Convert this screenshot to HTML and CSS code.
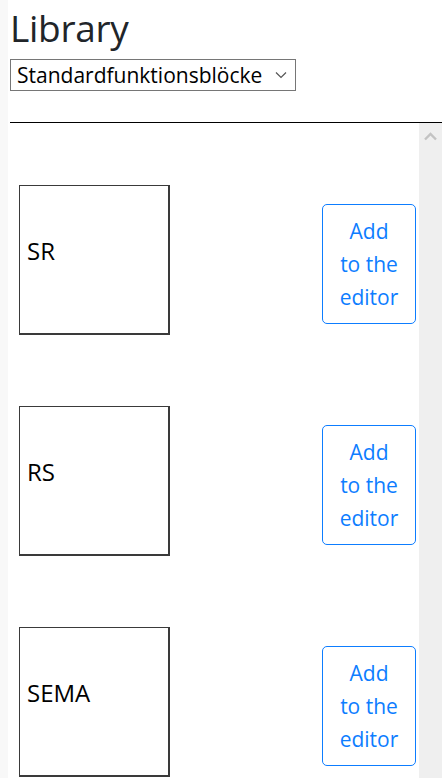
FILE: index.html
```html
<!DOCTYPE html>
<html lang="de">
<head>
<meta charset="utf-8">
<title>Library</title>
<link rel="stylesheet" href="styles.css">
</head>
<body>
<div class="page">
  <header class="head">
    <h1 class="title">Library</h1>
    <div class="select-wrap">
      <select class="select">
        <option>Standardfunktionsblöcke</option>
      </select>
      <svg class="chev" width="12" height="8" viewBox="0 0 12 8"><path d="M1 1.5 L6 6.5 L11 1.5" fill="none" stroke="#555" stroke-width="1.2"/></svg>
    </div>
    <hr class="rule">
  </header>
  <div class="pane">
    <div class="list">
      <div class="row">
        <div class="block"><span class="label">SR</span></div>
        <button class="add">Add<br>to the<br>editor</button>
      </div>
      <div class="row">
        <div class="block"><span class="label">RS</span></div>
        <button class="add">Add<br>to the<br>editor</button>
      </div>
      <div class="row">
        <div class="block"><span class="label">SEMA</span></div>
        <button class="add">Add<br>to the<br>editor</button>
      </div>
    </div>
    <div class="scrollbar">
      <svg class="up" width="13" height="9" viewBox="0 0 13 9"><path d="M1 7.5 L6.5 2 L12 7.5" fill="none" stroke="#c3c3c3" stroke-width="2.4"/></svg>
    </div>
  </div>
</div>
</body>
</html>
```
FILE: styles.css
```css
html, body {
  margin: 0;
  padding: 0;
  height: 100%;
  overflow: hidden;
}
body {
  font-family: "Open Sans", "Noto Sans", sans-serif;
  color: #212529;
  background: linear-gradient(to right, #f8f8f8 8px, #ffffff 8px);
}
.page {
  display: flex;
  flex-direction: column;
  height: 100%;
  padding-left: 10px;
  box-sizing: border-box;
}
.head {
  padding-top: 4px;
}
.title {
  margin: 0;
  font-weight: 400;
  font-size: 37px;
  line-height: 48px;
  letter-spacing: -0.3px;
}
.select-wrap {
  position: relative;
  width: 286px;
  margin-top: 7px;
}
.select {
  appearance: none;
  -webkit-appearance: none;
  width: 286px;
  height: 32px;
  border: 1px solid #767676;
  border-radius: 0;
  background: #fff;
  color: #000;
  font-family: "Open Sans", sans-serif;
  font-size: 21px;
  padding: 0 0 0 6px;
  letter-spacing: 0;
}
.chev {
  position: absolute;
  right: 9px;
  top: 12px;
}
.rule {
  margin: 31px 0 0;
  border: 0;
  border-top: 1px solid #000;
}
.pane {
  flex: 1;
  display: flex;
  min-height: 0;
}
.list {
  flex: 1;
  display: flex;
  flex-direction: column;
  gap: 71px;
  padding: 62px 3px 0 9px;
  overflow: hidden;
}
.row {
  display: flex;
  align-items: center;
  justify-content: space-between;
  flex-shrink: 0;
}
.block {
  width: 151px;
  height: 150px;
  box-sizing: border-box;
  border-style: solid;
  border-color: #3a3a3a;
  border-width: 1px 2px 2px 1px;
  display: flex;
  align-items: center;
  padding: 0 0 18px 7px;
  color: #000;
  font-size: 24px;
}
.add {
  margin-top: 8px;
  width: 94px;
  height: 120px;
  box-sizing: border-box;
  border: 1px solid #0d7dff;
  border-radius: 5px;
  background: #fff;
  color: #0d7dff;
  font-family: "Open Sans", sans-serif;
  font-size: 21px;
  line-height: 33px;
  padding: 0;
  text-align: center;
}
.scrollbar {
  width: 23px;
  background: #efefef;
  display: flex;
  justify-content: center;
  padding-top: 9px;
  box-sizing: border-box;
}
.up {
  display: block;
}
```
